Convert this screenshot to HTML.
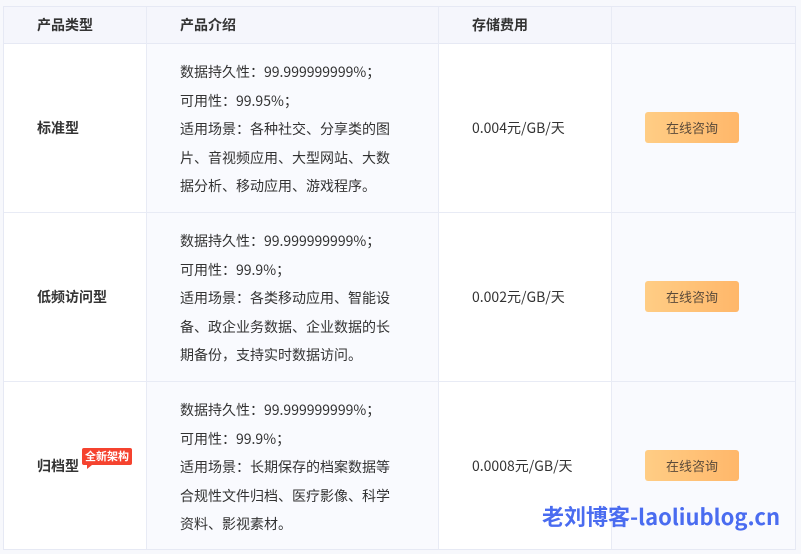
<!DOCTYPE html>
<html><head><meta charset="utf-8"><style>
*{margin:0;padding:0;box-sizing:border-box}
body{width:801px;height:554px;background:#f7f8fc;font-family:"Noto Sans CJK SC","Liberation Sans",sans-serif;font-size:14px;color:#333;position:relative;overflow:hidden}
.t{position:absolute;left:3px;top:6px;width:793px;height:544px;border:1px solid #e6e9f4;background:#fff}
.c{position:absolute}
.h{position:absolute;left:0;top:0;width:791px;height:37px;background:#f5f6fc;border-bottom:1px solid #e6e9f4}
.v{position:absolute;top:0;width:1px;height:542px;background:#e8ebf5}
.r{position:absolute;left:0;width:791px;height:1px;background:#e8ebf5}
.hd{position:absolute;font-weight:bold;color:#333;line-height:20px}
.ty{position:absolute;font-weight:bold;line-height:20px}
.in{position:absolute;line-height:28.5px;color:#333}
.pr{position:absolute;line-height:20px}
.btn{position:absolute;width:94px;height:31px;border-radius:3px;background:linear-gradient(90deg,#ffcd85,#ffb76a);text-align:center;line-height:31px;font-size:13px;color:#5a4a3a}
.tag{position:absolute;left:82px;top:448px;background:#f5432f;color:#fff;font-size:11px;font-weight:bold;padding:0 3px;height:17px;line-height:17px;border-radius:2px}
.tag:after{content:"";position:absolute;left:5px;bottom:-4px;border-left:5px solid #f5432f;border-bottom:4px solid transparent}
.wm{position:absolute;left:542px;top:502px;font-size:22px;font-weight:bold;color:#4a6cf0;line-height:28px}
</style></head><body>
<div class="t">
<div class="c" style="left:143px;top:37px;width:292px;height:505px;background:#f9fafe"></div>
<div class="c" style="left:608px;top:37px;width:183px;height:505px;background:#f9fafe"></div>
<div class="h"></div>
<div class="v" style="left:142px"></div>
<div class="v" style="left:434px"></div>
<div class="v" style="left:607px"></div>
<div class="r" style="top:205px"></div>
<div class="r" style="top:374px"></div>
</div>
<div class="hd" style="left:37px;top:15px">产品类型</div>
<div class="hd" style="left:180px;top:15px">产品介绍</div>
<div class="hd" style="left:472px;top:15px">存储费用</div>

<div class="ty" style="left:37px;top:118px">标准型</div>
<div class="in" style="left:180px;top:58px">数据持久性：99.999999999%；<br>可用性：99.95%；<br>适用场景：各种社交、分享类的图<br>片、音视频应用、大型网站、大数<br>据分析、移动应用、游戏程序。</div>
<div class="pr" style="left:472px;top:118px">0.004元/GB/天</div>
<div class="btn" style="left:645px;top:112px">在线咨询</div>

<div class="ty" style="left:37px;top:287px">低频访问型</div>
<div class="in" style="left:180px;top:227px">数据持久性：99.999999999%；<br>可用性：99.9%；<br>适用场景：各类移动应用、智能设<br>备、政企业务数据、企业数据的长<br>期备份，支持实时数据访问。</div>
<div class="pr" style="left:472px;top:287px">0.002元/GB/天</div>
<div class="btn" style="left:645px;top:281px">在线咨询</div>

<div class="ty" style="left:37px;top:456px">归档型</div>
<div class="tag">全新架构</div>
<div class="in" style="left:180px;top:396px">数据持久性：99.999999999%；<br>可用性：99.9%；<br>适用场景：长期保存的档案数据等<br>合规性文件归档、医疗影像、科学<br>资料、影视素材。</div>
<div class="pr" style="left:472px;top:456px">0.0008元/GB/天</div>
<div class="btn" style="left:645px;top:450px">在线咨询</div>

<div class="wm">老刘博客-laoliublog.cn</div>
</body></html>
